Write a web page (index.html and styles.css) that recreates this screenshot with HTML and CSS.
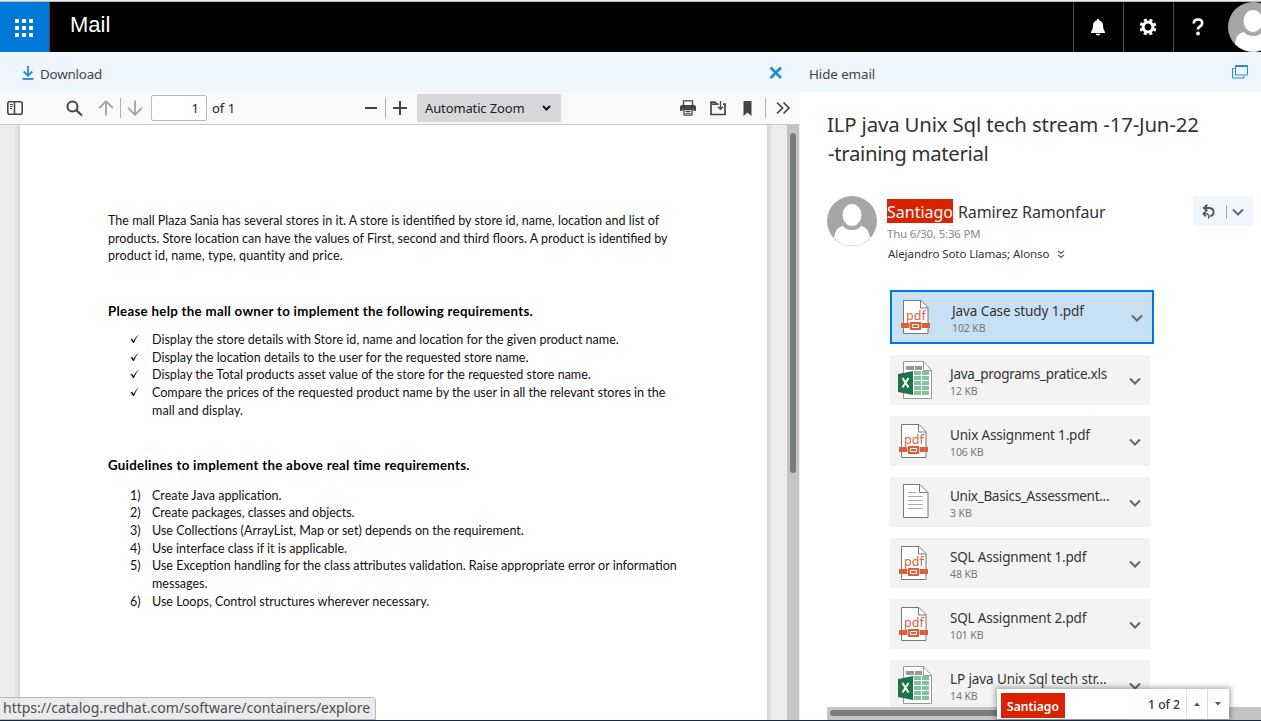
FILE: index.html
```html
<!DOCTYPE html>
<html lang="en">
<head>
<meta charset="utf-8">
<title>Mail</title>
<link rel="stylesheet" href="styles.css">
</head>
<body>
<svg width="0" height="0" class="defs">
  <symbol id="pdf" viewBox="0 0 30 36"><path d="M2.500 1.500h17.500l7 7v26h-24.500z" fill="#fff" stroke="#777"/><path d="M19.500 1.500v7.500h7.500" fill="none" stroke="#777"/><path d="M0 24h8.500v5h-8.500zM20.500 24h8.500v5h-8.500z" fill="#d9603f"/><path d="M9 23h11v8h-11z" fill="#d9603f"/><path d="M11.500 25.500h6v3h-6z" fill="#d9603f" stroke="#fff"/></symbol>
  <symbol id="xls" viewBox="0 0 36 40"><path d="M5.500 1.500h20l8 9v28h-28z" fill="#fff" stroke="#999"/><path d="M25.500 1.500v9h8" fill="none" stroke="#999"/><path d="M8 6h8v4h-8zM17 6h7v4h-7z" fill="#999"/><path d="M16 11h7v4h-7zM24 11h7v4h-7zM16 16h7v4h-7zM24 16h7v4h-7zM16 21h7v4h-7zM24 21h7v4h-7zM16 26h7v4h-7zM24 26h7v4h-7zM16 31h7v4h-7zM24 31h7v4h-7z" fill="#85c0a0"/><path d="M0 14l15-3v24l-15-3z" fill="#1f7346"/><path d="M4.500 18l6 9.500M10.500 18l-6 9.500" stroke="#fff" stroke-width="2"/></symbol>
  <symbol id="txt" viewBox="0 0 30 36"><path d="M2.500 1.500h16.500l8 8v25h-24.500z" fill="#fff" stroke="#777"/><path d="M18.500 1.500v8h8" fill="none" stroke="#777"/><path d="M7 9.500h8M7 13.500h15M7 17.500h15M7 21.500h15M7 25.500h15" stroke="#aaa"/></symbol>
  <symbol id="chev" viewBox="0 0 12 8"><path d="M1 1.500l5 5l5-5" fill="none" stroke="#666" stroke-width="2"/></symbol>
  <symbol id="person" viewBox="0 0 50 50"><circle cx="25" cy="25" r="25" fill="#a6a6a6"/><path d="M7 42q1-10.500 9-12q3 4 9 4t9-4q8 1.500 9 12a25 25 0 0 1-36 0z" fill="#fff"/><ellipse cx="25" cy="19" rx="10" ry="11.500" fill="#fff" stroke="#a6a6a6"/></symbol>
  <symbol id="tick" viewBox="0 0 10 10"><path d="M.5 5.500l1.700-.8l1.300 2.300q2-4.500 5.500-6.500q-3.500 3.500-5 8.500h-1q-1-2.500-2.500-3.500z" fill="#111"/></symbol>
</svg>
<div class="edge"></div>
<header class="top">
  <div class="launcher"><i></i><i></i><i></i><i></i><i></i><i></i><i></i><i></i><i></i></div>
  <div class="brand">Mail</div>
  <div class="tool"><svg width="16" height="18" viewBox="0 0 16 18"><path d="M7 1h2v1.200q3.800.8 4 5.300q0 4.500 2 6.500v1h-14v-1q2-2 2-6.500q.2-4.500 4-5.300zM5.500 15.700h5q-.5 1.800-2.500 1.800t-2.500-1.800z" fill="#fff"/></svg></div>
  <div class="tool"><svg width="18" height="18" viewBox="-9 -9 18 18"><circle r="4.900" fill="none" stroke="#fff" stroke-width="3"/><circle r="7.200" fill="none" stroke="#fff" stroke-width="2.600" stroke-dasharray="3 2.655" transform="rotate(10)"/></svg></div>
  <div class="tool"><svg width="12" height="18" viewBox="0 0 12 18"><path d="M1.800 5.500q0-4 4.200-4t4.200 3.500q0 2-2.200 3.300t-2 3.200" fill="none" stroke="#fff" stroke-width="2.700"/><circle cx="6" cy="15.500" r="1.900" fill="#fff"/></svg></div>
  <svg class="me" width="50" height="50"><use href="#person"/></svg>
</header>
<div class="actions">
  <svg width="12" height="16" viewBox="0 0 12 16"><path d="M6 1v10M1.700 6.500l4.300 4.300l4.300-4.300" fill="none" stroke="#2b88d8" stroke-width="1.800"/><path d="M.5 13h11v1.800h-11z" fill="#2b88d8"/></svg>
  <span class="download">Download</span>
  <svg class="close" width="14" height="14" viewBox="0 0 14 14"><path d="M1.500 1.500l10.500 10.500M12 1.500l-10.500 10.500" stroke="#2b88d8" stroke-width="2.700"/></svg>
  <span class="hide">Hide email</span>
  <svg class="popout" width="17" height="16" viewBox="0 0 17 16"><path d="M3.500 1.500h12v9.500h-12z" fill="none" stroke="#2b88d8"/><path d="M3 1h13v2h-13z" fill="#2b88d8"/><path d="M2.500 4.500h-2v9.500h11.500v-2" fill="none" stroke="#2b88d8"/></svg>
</div>
<main>
  <section class="viewer">
    <div class="bar">
      <svg width="16" height="14" viewBox="0 0 16 14"><rect x=".8" y=".8" width="14.400" height="12.400" rx="2" fill="none" stroke="#444" stroke-width="1.600"/><path d="M7.500 1v12" stroke="#444" stroke-width="1.500"/><path d="M3 3.500h3M3 5.500h2.500M3 7.500h2" stroke="#444"/></svg>
      <svg class="search" width="17" height="17" viewBox="0 0 17 17"><circle cx="6.500" cy="6.500" r="5" fill="none" stroke="#444" stroke-width="2"/><path d="M10 10l6 5.500" stroke="#444" stroke-width="2.200"/></svg>
      <svg class="prev" width="16" height="16" viewBox="0 0 16 16"><path d="M8 15.500v-14M1.200 8l6.800-6.800l6.800 6.800" fill="none" stroke="#a3a3a3" stroke-width="1.800"/></svg>
      <i class="sep sep-page"></i>
      <svg class="next" width="16" height="16" viewBox="0 0 16 16"><path d="M8 .5v14M1.200 8l6.800 6.800l6.800-6.800" fill="none" stroke="#a3a3a3" stroke-width="1.800"/></svg>
      <div class="num">1</div>
      <span class="of">of 1</span>
      <svg width="12" height="14" viewBox="0 0 12 14"><path d="M0 7h12" stroke="#444" stroke-width="2"/></svg>
      <i class="sep sep-zoom"></i>
      <svg class="plus" width="14" height="14" viewBox="0 0 14 14"><path d="M0 7h14M7 0v14" stroke="#444" stroke-width="2"/></svg>
      <div class="zoom">Automatic Zoom<svg width="9" height="6" viewBox="0 0 9 6"><path d="M1 1l3.500 3.500l3.500-3.500" fill="none" stroke="#111" stroke-width="2"/></svg></div>
      <svg class="print" width="16" height="16" viewBox="0 0 16 16"><path d="M3.500 5v-4.200h9v4.200" fill="none" stroke="#444" stroke-width="1.300"/><path d="M2 5h12q2 0 2 2v4h-2.500v-1.500h-11v1.500h-2.500v-4q0-2 2-2z" fill="#444"/><path d="M4 9.500h8v5.700h-8z" fill="#f9f9fa" stroke="#444" stroke-width="1.300"/><path d="M5.500 11.500h5M5.500 13.300h5" stroke="#444"/></svg>
      <svg class="save" width="16" height="15" viewBox="0 0 16 15"><path d="M8.500 3.200h-2l-1.500-2h-4v12.300h14v-10.300h-2" fill="none" stroke="#444" stroke-width="1.700"/><path d="M1 3.200h6" stroke="#444" stroke-width="1.500"/><path d="M10.500 0v8M8 5.800l2.500 2.500l2.500-2.500" fill="none" stroke="#444" stroke-width="1.300"/></svg>
      <svg class="mark" width="9" height="15" viewBox="0 0 9 15"><path d="M.5 0h8v15l-4-3.500l-4 3.500z" fill="#444"/></svg>
      <i class="sep sep-more"></i>
      <svg class="more" width="14" height="12" viewBox="0 0 14 12"><path d="M1 .5l5.500 5.500l-5.500 5.500M7.500 .5l5.500 5.500l-5.500 5.500" fill="none" stroke="#444" stroke-width="1.700"/></svg>
    </div>
    <div class="canvas">
      <article class="page">
        <p>The mall Plaza Sania has several stores in it. A store is identified by store id, name, location and list of<br>products. Store location can have the values of First, second and third floors. A product is identified by<br><span class="loose">product id, name, type, quantity and price.</span></p>
        <h2>Please help the mall owner to implement the following requirements.</h2>
        <ul>
          <li><svg><use href="#tick"/></svg><span>Display the store details with Store id, name and location for the given product name.</span></li>
          <li><svg><use href="#tick"/></svg><span>Display the location details to the user for the requested store name.</span></li>
          <li><svg><use href="#tick"/></svg><span>Display the Total products asset value of the store for the requested store name.</span></li>
          <li><svg><use href="#tick"/></svg><span>Compare the prices of the requested product name by the user in all the relevant stores in the<br><span class="loose">mall and display.</span></span></li>
        </ul>
        <h2 class="second">Guidelines to implement the above real time requirements.</h2>
        <ol>
          <li><em>1)</em><span>Create Java application.</span></li>
          <li><em>2)</em><span class="tight">Create packages, classes and objects.</span></li>
          <li><em>3)</em><span>Use Collections (ArrayList, Map or set) depends on the requirement.</span></li>
          <li><em>4)</em><span class="tight">Use interface class if it is applicable.</span></li>
          <li><em>5)</em><span>Use Exception handling for the class attributes validation. Raise appropriate error or information<br>messages.</span></li>
          <li><em>6)</em><span>Use Loops, Control structures wherever necessary.</span></li>
        </ol>
      </article>
      <div class="track"><i></i></div>
    </div>
  </section>
  <section class="mail">
    <h1>ILP java Unix Sql tech stream -17-Jun-22<br><span>-training material</span></h1>
    <div class="from">
      <svg width="50" height="50"><use href="#person"/></svg>
      <div class="who">
        <div class="name"><mark>Santiago</mark><span>Ramirez Ramonfaur</span></div>
        <div class="date">Thu 6/30, 5:36 PM</div>
        <div class="to">Alejandro Soto Llamas; Alonso<svg width="8" height="9" viewBox="0 0 8 9"><path d="M1 .8l3 2.700l3-2.700M1 4.800l3 2.700l3-2.700" fill="none" stroke="#555" stroke-width="1.100"/></svg></div>
      </div>
      <div class="reply"><svg width="13" height="16" viewBox="0 0 13 16"><path d="M5.300 .8l-3.300 3.200l3.300 3.200M2.300 4h5q4.300 .3 4.300 4.100t-3.600 4" fill="none" stroke="#555" stroke-width="1.900"/><path d="M3.800 7.200l-2.600 2.600l2.600 2.600M1.500 9.800h3q3 .5 2 4.900" fill="none" stroke="#555" stroke-width="1.500"/></svg><i></i><svg class="chev" width="12" height="8"><use href="#chev"/></svg></div>
    </div>
    <div class="files">
      <div class="file on"><div class="icon"><svg width="30" height="36"><use href="#pdf"/></svg><small>pdf</small></div><div><div class="fn">Java Case study 1.pdf</div><div class="size">102 KB</div></div><svg class="chev"><use href="#chev"/></svg></div>
      <div class="file"><div class="icon"><svg class="sheet" width="36" height="40"><use href="#xls"/></svg></div><div><div class="fn tight">Java_programs_pratice.xls</div><div class="size">12 KB</div></div><svg class="chev"><use href="#chev"/></svg></div>
      <div class="file"><div class="icon"><svg width="30" height="36"><use href="#pdf"/></svg><small>pdf</small></div><div><div class="fn snug">Unix Assignment 1.pdf</div><div class="size">106 KB</div></div><svg class="chev"><use href="#chev"/></svg></div>
      <div class="file"><div class="icon"><svg class="text" width="30" height="36"><use href="#txt"/></svg></div><div><div class="fn tight">Unix_Basics_Assessment...</div><div class="size">3 KB</div></div><svg class="chev"><use href="#chev"/></svg></div>
      <div class="file"><div class="icon"><svg width="30" height="36"><use href="#pdf"/></svg><small>pdf</small></div><div><div class="fn snug">SQL Assignment 1.pdf</div><div class="size">48 KB</div></div><svg class="chev"><use href="#chev"/></svg></div>
      <div class="file"><div class="icon"><svg width="30" height="36"><use href="#pdf"/></svg><small>pdf</small></div><div><div class="fn snug">SQL Assignment 2.pdf</div><div class="size">101 KB</div></div><svg class="chev"><use href="#chev"/></svg></div>
      <div class="file"><div class="icon"><svg class="sheet" width="36" height="40"><use href="#xls"/></svg></div><div><div class="fn">LP java Unix Sql tech str...</div><div class="size">14 KB</div></div><svg class="chev"><use href="#chev"/></svg></div>
    </div>
    <div class="htrack"><i></i></div>
  </section>
</main>
<div class="find"><mark>Santiago</mark><span>1 of 2</span><i><svg width="6" height="4"><path d="M0 4l3-3.500l3 3.500z" fill="#555"/></svg></i><i><svg width="6" height="4"><path d="M0 0l3 3.500l3-3.500z" fill="#555"/></svg></i></div>
<div class="status">https://catalog.redhat.com/software/containers/explore</div>
</body>
</html>
```
FILE: styles.css
```css
* { box-sizing: border-box; }
body { margin: 0; width: 1261px; height: 721px; overflow: hidden; position: relative; display: flex; flex-direction: column; background: #fff; font-family: "Noto Sans", "Open Sans", sans-serif; color: #333; white-space: nowrap; border-bottom: 1px solid #132c45; }
svg { display: block; flex: none; overflow: visible; }
.defs { position: absolute; }
i, em { font-style: normal; }
h1, h2, p, ul, ol { margin: 0; padding: 0; font-weight: 400; list-style: none; }
.edge { height: 2px; flex: none; background: #eee; border-bottom: 1px solid #b5b5b5; }

/* Suite header */
.top { height: 50px; flex: none; background: #000; display: flex; overflow: hidden; }
.launcher { width: 50px; background: #0078d7; border-right: 1px solid #444; padding: 17px 0 0 15px; display: grid; grid-template-columns: repeat(3, 4px); grid-auto-rows: 4px; gap: 3px; }
.launcher i { background: #fff; }
.brand { flex: 1; padding-left: 20px; font: 22px/46px "Liberation Sans", Arial, sans-serif; color: #fff; }
.tool { width: 50px; border-left: 1px solid #4a4a4a; padding-right: 1px; display: flex; align-items: center; justify-content: center; }
.me { margin-left: 5px; margin-right: -17px; }

/* Attachment actions */
.actions { height: 40px; flex: none; background: #eff6fd; display: flex; align-items: center; padding: 4px 12px 0 22px; font-size: 13.400px; color: #444; letter-spacing: -.2px; }
.download { margin-left: 6px; width: 729px; }
.actions svg { margin-top: -2px; }
.actions .popout { margin: -5px 0 0 auto; }
.hide { margin-left: 26px; letter-spacing: -.1px; }

main { flex: 1; display: flex; min-height: 0; }
.viewer { width: 800px; display: flex; flex-direction: column; }
.bar { height: 33px; flex: none; background: #f9f9fa; border-bottom: 1px solid #c8c8c8; display: flex; align-items: center; padding-left: 7px; font-size: 13px; color: #222; }
.sep { width: 1px; height: 20px; background: #b0b0b0; }
.search { margin-left: 43px; }
.prev { margin-left: 15px; }
.sep-page { margin-left: 6px; }
.next { margin-left: 6px; }
.num { width: 56px; height: 26px; margin-left: 8px; border: 1px solid #bbb; border-radius: 2px; background: #fff; text-align: right; padding-right: 7px; line-height: 25px; }
.of { margin-left: 5px; width: 153px; }
.sep-zoom { margin-left: 8px; }
.plus { margin-left: 7px; }
.zoom { width: 144px; height: 28px; margin-left: 10px; background: #d7d7db; padding: 0 10px 0 8px; display: flex; align-items: center; justify-content: space-between; border-radius: 1px; letter-spacing: -.13px; }
.print { margin-left: 119px; }
.save { margin-left: 14px; }
.mark { margin-left: 17px; }
.sep-more { margin-left: 13px; }
.more { margin-left: 10px; }

/* Document */
.canvas { flex: 1; display: flex; background: #ededf0; min-height: 0; }
.page { width: 747px; margin-left: 20px; background: #fff; box-shadow: 0 0 0 2px #d8d8db, 0 0 0 5px #e3e3e7; padding: 87px 0 0 88px; font: 12.550px/17.700px Lato, Carlito, sans-serif; color: #111; clip-path: inset(0 -6px 0 -6px); }
.page h2 { margin-top: 37.500px; font-size: 13.300px; line-height: 17.700px; font-weight: 700; letter-spacing: .28px; color: #000; }
.page h2.second { margin-top: 38px; }
.page ul { margin-top: 10.500px; }
.page ol { margin-top: 11.500px; }
.page li { display: grid; grid-template-columns: 22px auto; padding-left: 22px; }
.page li svg { width: 10px; height: 10px; margin-top: 3px; }
.page .loose { letter-spacing: .08px; }
.page .tight { letter-spacing: -.03px; }
.track { width: 12px; margin-left: auto; margin-right: 1px; background: #c3c5c3; padding: 8px 3px; }
.track i { display: block; width: 6px; height: 340px; border-radius: 3px; background: #7a7d7d; }

/* Message */
.mail { width: 461px; position: relative; padding-left: 27px; display: flex; flex-direction: column; overflow: hidden; }
h1 { font-size: 20.400px; line-height: 29px; padding-top: 18px; letter-spacing: -.165px; }
h1 span { letter-spacing: -.35px; margin-left: 1px; }
.from { display: flex; margin-top: 28px; height: 67px; flex: none; }
.who { margin-left: 10px; width: 306px; }
mark { background: #d92300; color: #fff; display: block; }
.name { display: flex; font-size: 16px; padding-top: 3px; }
.name mark { height: 24px; width: 66px; line-height: 26px; }
.name span { margin-left: 5px; line-height: 26px; letter-spacing: -.1px; }
.date { font-size: 11.400px; line-height: 18px; color: #888; letter-spacing: -.15px; }
.to { font-size: 11.500px; line-height: 18px; margin: 2px 0 0 1px; display: flex; align-items: center; letter-spacing: -.065px; }
.to svg { margin-left: 8px; }
.reply { width: 60px; height: 30px; background: #eff6fd; display: flex; align-items: center; padding: 1px 0 0 9px; }
.reply i { width: 1px; height: 14px; background: #aaa; margin: 0 5px 0 11px; }
.files { padding-left: 63px; margin-top: 27px; display: flex; flex-direction: column; gap: 11px; }
.file { width: 260px; height: 50px; background: #f3f3f3; display: flex; flex: none; }
.file.on { width: 264px; height: 54px; border: 2px solid #0078d7; background: #c7e0f4; }
.icon { width: 60px; padding: 7px 0 0 9px; position: relative; }
.icon small { position: absolute; left: 14px; top: 15px; font-size: 12.500px; line-height: 18px; color: #d9603f; }
.icon .sheet { margin: -2px 0 0 -1px; }
.icon .text { margin: -1px 0 0 2px; }
.fn { font-size: 13.500px; line-height: 20px; margin-top: 9px; color: #333; letter-spacing: -.1px; }
.fn.snug { letter-spacing: -.18px; }
.fn.tight { letter-spacing: -.29px; }
.size { font-size: 10.500px; line-height: 14px; color: #777; letter-spacing: -.1px; }
.file .chev { width: 12px; height: 8px; margin: 22px 9px 0 auto; }
.htrack { position: absolute; left: 27px; right: 0; bottom: 0; height: 13px; background: #c3c5c3; padding: 3px; }
.htrack i { display: block; width: 260px; height: 6px; border-radius: 3px; background: #7a7d7d; }

/* Floating bars */
.find { position: absolute; left: 997px; top: 689px; width: 232px; height: 30px; background: #fff; box-shadow: 0 0 5px 2px rgba(0,0,0,.3); display: flex; padding-left: 4px; font-size: 12.200px; color: #333; }
.find mark { width: 64px; height: 25px; margin: 4px 83px 0 0; padding-left: 6px; line-height: 27px; font-weight: 600; font-size: 12.100px; }
.find span { width: 38px; line-height: 31px; font-weight: 500; }
.find i { width: 21px; border-left: 1px solid #ddd; display: flex; align-items: center; justify-content: center; }
.status { position: absolute; left: -1px; top: 697px; width: 377px; height: 23px; background: #ebebeb; border: 1px solid #b8b8b8; border-radius: 0 4px 0 0; padding-left: 3px; font-size: 14px; line-height: 20px; color: #4a4f52; }
```
